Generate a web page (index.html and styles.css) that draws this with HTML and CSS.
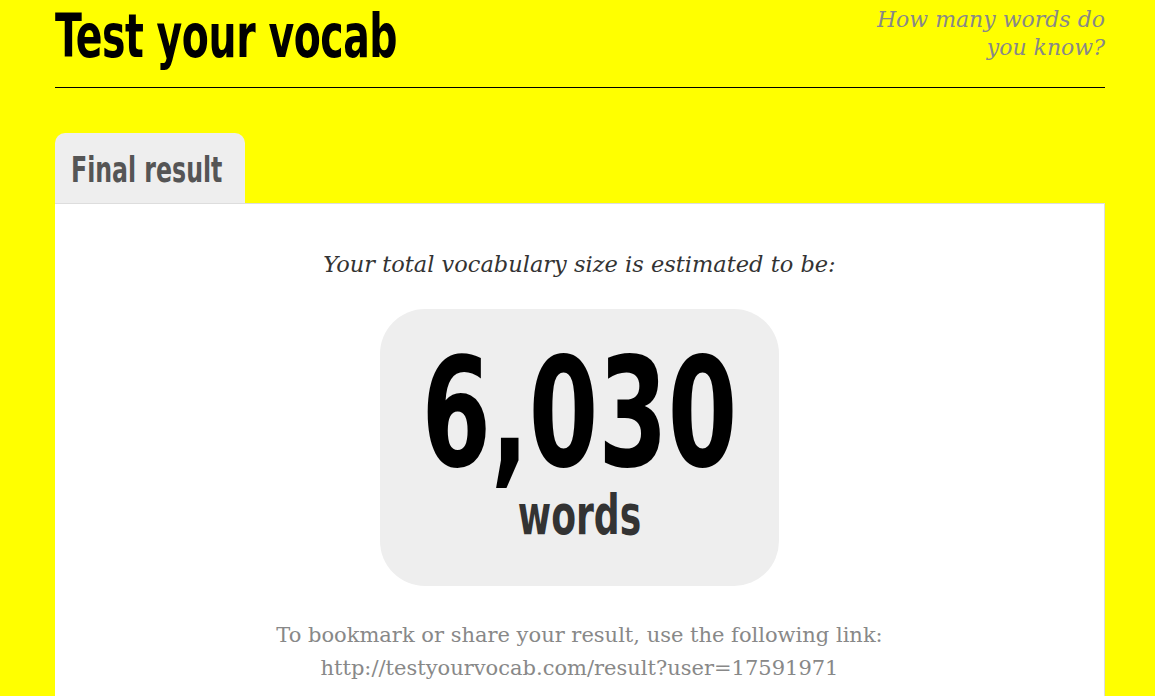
FILE: index.html
```html
<!DOCTYPE html>
<html lang="en">
<head>
<meta charset="utf-8">
<title>Test your vocab</title>
<link rel="stylesheet" href="styles.css">
</head>
<body>
<div class="page">
  <header class="header">
    <h1 class="logo"><span class="squeeze squeeze-left">Test your vocab</span></h1>
    <p class="tagline">How many words do<br>you know?</p>
  </header>
  <section class="result">
    <div class="tab"><h2 class="tab-title"><span class="squeeze squeeze-left">Final result</span></h2></div>
    <div class="panel">
      <p class="intro">Your total vocabulary size is estimated to be:</p>
      <div class="score">
        <div class="score-number"><span class="squeeze">6,030</span></div>
        <div class="score-unit"><span class="squeeze">words</span></div>
      </div>
      <p class="share">To bookmark or share your result, use the following link:<br>http://testyourvocab.com/result?user=17591971</p>
    </div>
  </section>
</div>
</body>
</html>
```
FILE: styles.css
```css
html, body {
  margin: 0;
  padding: 0;
  background: #ffff00;
}
body {
  font-family: Georgia, "DejaVu Serif", serif;
}
.page {
  width: 1050px;
  margin: 0 0 0 55px;
}
.squeeze {
  display: inline-block;
  white-space: nowrap;
  transform: scaleX(0.73);
  transform-origin: center;
}
.squeeze-left {
  transform-origin: left;
}
.header {
  display: flex;
  justify-content: space-between;
  align-items: flex-start;
  height: 87px;
  border-bottom: 1px solid #000;
}
.logo {
  margin: 0;
  padding-top: 4px;
  font-family: Impact, "DejaVu Sans Condensed", sans-serif;
  font-weight: bold;
  font-size: 60px;
  line-height: 64px;
  letter-spacing: -0.6px;
  color: #000;
  width: 360px;
}
.tagline {
  margin: 0;
  padding-top: 6px;
  text-align: right;
  font-style: italic;
  font-size: 22px;
  line-height: 28px;
  color: #888;
}
.result {
  margin-top: 45px;
}
.tab {
  width: 190px;
  height: 71px;
  box-sizing: border-box;
  background: #eeeeee;
  border-radius: 10px 10px 0 0;
  padding: 15px 0 0 16px;
}
.tab-title {
  margin: 0;
  font-family: Impact, "DejaVu Sans Condensed", sans-serif;
  font-weight: bold;
  font-size: 36px;
  line-height: 44px;
  color: #555;
}
.panel {
  background: #fff;
  border-top: 1px solid #ddd;
  border-right: 1px solid #ddd;
  margin-top: -1px;
  text-align: center;
  padding: 44px 0 20px;
  height: 480px;
}
.intro {
  margin: 0;
  font-style: italic;
  font-size: 22.5px;
  line-height: 32px;
  color: #333;
}
.score {
  width: 399px;
  height: 277px;
  margin: 29px auto 0;
  background: #eeeeee;
  border-radius: 45px;
  box-sizing: border-box;
  padding-top: 35px;
  display: flex;
  flex-direction: column;
  align-items: center;
}
.score-number {
  display: flex;
  justify-content: center;
  width: 100%;
  font-family: Impact, "DejaVu Sans Condensed", sans-serif;
  font-weight: bold;
  font-size: 152px;
  line-height: 140px;
  color: #000;
}
.score-unit {
  display: flex;
  justify-content: center;
  width: 100%;
  margin-top: 3px;
  font-family: Impact, "DejaVu Sans Condensed", sans-serif;
  font-weight: bold;
  font-size: 55px;
  line-height: 56px;
  color: #333;
}
.share {
  margin: 33px 0 0;
  font-size: 21px;
  line-height: 33px;
  color: #888;
}
```
